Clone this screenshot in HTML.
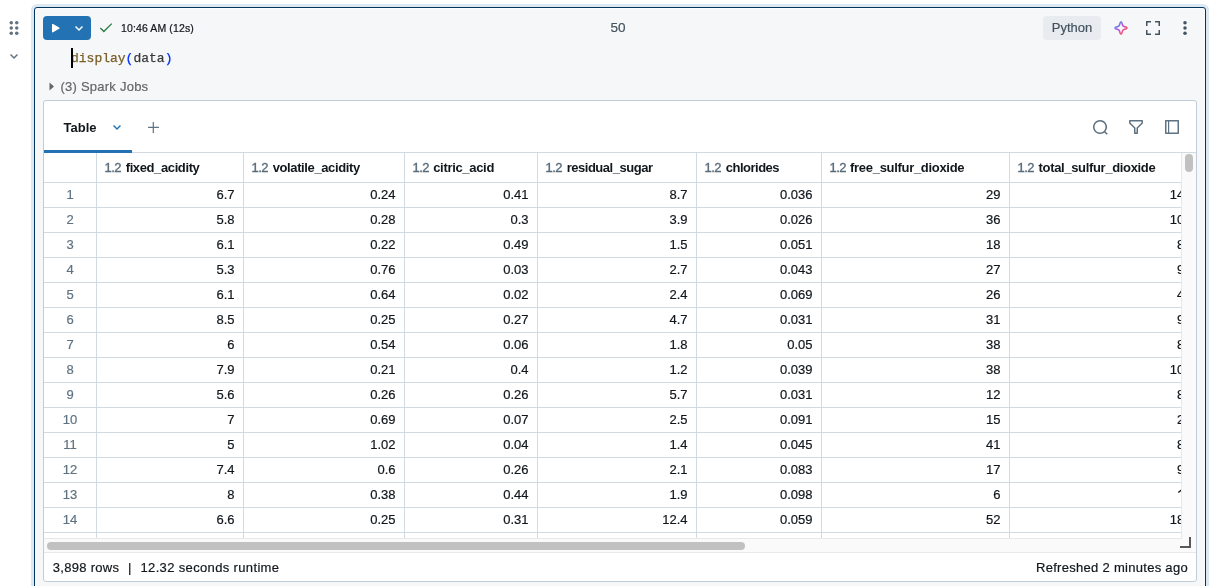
<!DOCTYPE html>
<html><head><meta charset="utf-8"><title>Notebook</title><style>*{box-sizing:border-box;margin:0;padding:0}
html,body{width:1211px;height:586px;overflow:hidden;background:#fff}
body{font-family:"Liberation Sans",sans-serif;font-size:13px;color:#11171c;position:relative;-webkit-text-stroke:0.2px}
.abs{position:absolute}
#root{position:absolute;left:0;top:0;width:1211px;height:586px;overflow:hidden;will-change:transform;transform:translateZ(0)}
.halo{position:absolute;left:31px;top:4px;width:1178px;height:600px;border-radius:6px;background:#dce8f2}
.cell{position:absolute;left:34px;top:7px;width:1172px;height:600px;border:1px solid #04355d;border-radius:3px;background:#f6f7f9;box-shadow:inset 0 0 0 1px #fdfdfe}
.runbtn{position:absolute;left:43px;top:16px;width:48px;height:24px;border-radius:4px;background:#2272b4}
.time{position:absolute;left:121px;top:21px;font-size:10.5px;line-height:14px;color:#11171c;white-space:nowrap;letter-spacing:0.12px}
.num{position:absolute;left:600px;top:20px;width:36px;text-align:center;font-size:13.5px;line-height:16px;color:#44535f}
.tag{position:absolute;left:1043px;top:16px;width:58px;height:24px;border-radius:4px;background:#e8ecf0;color:#44535f;font-size:13px;line-height:24px;text-align:center}
.code{position:absolute;left:71px;top:49.5px;-webkit-text-stroke:0.25px;font-family:"Liberation Mono",monospace;font-size:13px;line-height:18px;white-space:pre;color:#3a3a3a}
.code .f{color:#795e26}.code .p{color:#0431fa}
.cursor{position:absolute;left:71px;top:48px;width:2px;height:20px;background:#000}
.spark{position:absolute;left:60.5px;top:78.5px;font-size:13px;line-height:16px;color:#666;white-space:nowrap;letter-spacing:0.236px}
.out{position:absolute;left:43px;top:100px;width:1154px;height:482px;border:1px solid #c0cdd8;border-radius:3px;background:#fff;overflow:hidden}
.tabname{position:absolute;left:63.6px;top:120px;font-size:13px;line-height:16px;font-weight:bold;color:#11171c;-webkit-text-stroke:0}
.tabline{position:absolute;left:44px;top:150px;width:88px;height:3px;background:#2272b4;z-index:3}
.grid{position:absolute;left:44px;top:152px;width:1137px;height:386px;overflow:hidden;background:#fff;border-top:1px solid #d1d9e1}
.hrow{position:absolute;left:0;top:0;width:1160px;height:30px;border-bottom:1px solid #d1d9e1}
.hc{position:absolute;top:0;height:29px;border-right:1px solid #d1d9e1;line-height:29px;white-space:nowrap;font-size:13px;overflow:hidden}
.hc{box-sizing:border-box}
.hc .ty{color:#586b7a;position:absolute;left:7.5px;top:0;letter-spacing:-0.6px;-webkit-text-stroke:0.35px}
.hc .nm{font-weight:bold;color:#11171c;position:absolute;top:0;-webkit-text-stroke:0}
.row{position:absolute;left:0;width:1160px;height:25px;border-bottom:1px solid #d1d9e1}
.c{position:absolute;top:0;height:24px;border-right:1px solid #d1d9e1;line-height:24px;text-align:right;padding-right:8.5px;white-space:nowrap;font-size:13px;color:#11171c}
.c.idx{text-align:center;padding-right:0;color:#5f7281}
.hc,.c{width:auto}
.vtrack{position:absolute;left:1181px;top:153px;width:15px;height:385px;background:#fafafa;border-left:1px solid #e8e8e8}
.vthumb{position:absolute;left:1185px;top:154px;width:8px;height:18px;border-radius:4px;background:#c1c1c1}
.htrack{position:absolute;left:44px;top:538px;width:1152px;height:15px;background:#fafafa;border-bottom:1px solid #e8e8e8}
.htop{position:absolute;left:44px;top:538px;width:1138px;height:1px;background:#e8e8e8}
.hthumb{position:absolute;left:47px;top:542px;width:698px;height:8px;border-radius:4px;background:#c1c1c1}
.foot{position:absolute;top:560px;font-size:13px;line-height:16px;color:#11171c;white-space:nowrap}
</style></head><body><div id="root">
<div class="halo"></div>
<div class="cell"></div>
<!-- gutter icons -->
<svg class="abs" style="left:6px;top:20px" width="16" height="16" viewBox="0 0 16 16"><g fill="#5f7281"><circle cx="5.25" cy="2.75" r="1.75"/><circle cx="10.75" cy="2.75" r="1.75"/><circle cx="5.25" cy="8" r="1.75"/><circle cx="10.75" cy="8" r="1.75"/><circle cx="5.25" cy="13.25" r="1.75"/><circle cx="10.75" cy="13.25" r="1.75"/></g></svg>
<svg class="abs" style="left:6px;top:48px" width="16" height="16" viewBox="0 0 16 16"><path fill="#5f7281" fill-rule="evenodd" d="M8 8.917 10.947 6 12 7.042 8 11 4 7.042 5.053 6z"/></svg>
<div class="runbtn"></div>
<svg class="abs" style="left:47px;top:20px" width="16" height="16" viewBox="0 0 16 16"><path fill="#fff" d="M12.125 8.864a.75.75 0 0 0 0-1.3l-6-3.464A.75.75 0 0 0 5 4.750v6.928a.75.75 0 0 0 1.125.65z"/></svg>
<svg class="abs" style="left:71px;top:20px" width="16" height="16" viewBox="0 0 16 16"><path fill="#fff" fill-rule="evenodd" d="M8 8.917 10.947 6 12 7.042 8 11 4 7.042 5.053 6z"/></svg>
<svg class="abs" style="left:99px;top:21px" width="14" height="14" viewBox="0 0 16 16"><path fill="#277c43" fill-rule="evenodd" d="m15.06 3.56-9.53 9.53L1 8.56 2.06 7.5l3.47 3.47L14 2.5z"/></svg>
<div class="time">10:46 AM (12s)</div>
<div class="num">50</div>
<div class="tag">Python</div>
<div class="code"><span class="f">display</span><span class="p">(</span>data<span class="p">)</span></div>
<div class="cursor"></div>
<svg class="abs" style="left:48.5px;top:82px" width="6" height="9" viewBox="0 0 6 9"><path d="M0.5 0.5 L5 4.5 L0.5 8.5 Z" fill="#666"/></svg>
<div class="spark">(3) Spark Jobs</div>
<div class="out"></div>
<div class="tabname">Table</div>
<svg class="abs" style="left:109px;top:119px" width="16" height="16" viewBox="0 0 16 16"><path fill="#2272b4" fill-rule="evenodd" d="M8 8.917 10.947 6 12 7.042 8 11 4 7.042 5.053 6z"/></svg>
<svg class="abs" style="left:147px;top:121px" width="14" height="14" viewBox="0 0 14 14"><path d="M6.3 1.1 V12 M1.1 6.4 H12" fill="none" stroke="#5f7281" stroke-width="1.2"/></svg>
<div class="abs" style="left:44px;top:152px;width:1152px;height:1px;background:#d1d9e1;z-index:2"></div>
<div class="tabline"></div>
<!-- sparkle -->
<svg class="abs" style="left:1113px;top:20px" width="16" height="16" viewBox="0 0 16 16"><defs><linearGradient id="sg" x1="0.1" y1="0.1" x2="0.9" y2="0.9"><stop offset="0.1" stop-color="#4299e0"/><stop offset="0.5" stop-color="#ca42e0"/><stop offset="0.9" stop-color="#ff5f46"/></linearGradient></defs><path fill="url(#sg)" fill-rule="evenodd" d="M10.726 8.813 13.199 8l-2.473-.813a3 3 0 0 1-1.913-1.913L8 2.801l-.813 2.473a3 3 0 0 1-1.913 1.913L2.801 8l2.473.813a3 3 0 0 1 1.913 1.913L8 13.199l.813-2.473a3 3 0 0 1 1.913-1.913m2.941.612c1.376-.452 1.376-2.398 0-2.85l-2.473-.813a1.5 1.5 0 0 1-.956-.956l-.813-2.473c-.452-1.376-2.398-1.376-2.85 0l-.813 2.473a1.5 1.5 0 0 1-.956.956l-2.473.813c-1.376.452-1.376 2.398 0 2.85l2.473.813a1.5 1.5 0 0 1 .956.957l.813 2.472c.452 1.376 2.398 1.376 2.85 0l.813-2.473a1.5 1.5 0 0 1 .956-.956z" clip-rule="evenodd"/></svg>
<!-- fullscreen -->
<svg class="abs" style="left:1145px;top:20px" width="16" height="16" viewBox="0 0 16 16"><path fill="#44535f" d="M6 1v1.5H2.5V6H1V1zM10 2.5V1h5v5h-1.5V2.5zM2.5 10v3.5H6V15H1v-5zM13.5 13.500V10H15v5h-5v-1.500z"/></svg>
<!-- kebab -->
<svg class="abs" style="left:1177px;top:20px" width="16" height="16" viewBox="0 0 16 16"><g fill="#44535f"><circle cx="8" cy="2.75" r="1.75"/><circle cx="8" cy="8" r="1.75"/><circle cx="8" cy="13.25" r="1.75"/></g></svg>
<!-- search -->
<svg class="abs" style="left:1092px;top:119px" width="16" height="16" viewBox="0 0 16 16"><path fill="#5f7281" fill-rule="evenodd" d="M8 1a7 7 0 1 0 4.391 12.452l2.329 2.328 1.06-1.060-2.328-2.329A7 7 0 0 0 8 1M2.500 8a5.500 5.500 0 1 1 11 0 5.500 5.500 0 0 1-11 0"/></svg>
<!-- filter -->
<svg class="abs" style="left:1128px;top:119px" width="16" height="16" viewBox="0 0 16 16"><path fill="#5f7281" fill-rule="evenodd" d="M1 1.750A.75.75 0 0 1 1.750 1h12.500a.75.75 0 0 1 .75.750V4a.75.75 0 0 1-.22.530L10 9.310v4.940a.75.75 0 0 1-.75.750h-2.500a.75.75 0 0 1-.75-.750V9.310L1.220 4.530A.75.75 0 0 1 1 4zm1.500.750v1.190l4.780 4.780c.14.140.22.330.22.530v4.500h1V9a.75.750 0 0 1 .22-.530l4.780-4.780V2.500z"/></svg>
<!-- sidebar -->
<svg class="abs" style="left:1164px;top:119px" width="16" height="16" viewBox="0 0 16 16"><path fill="#5f7281" fill-rule="evenodd" d="M1 1.750A.75.75 0 0 1 1.750 1h12.500a.75.75 0 0 1 .75.750v12.500a.75.75 0 0 1-.75.750H1.750a.75.75 0 0 1-.75-.750zm1.500.750v11H4v-11zm2.700 0v11h8.300v-11z"/></svg>

<div class="grid">
<div class="hrow">
<div class="hc idx" style="left:0;width:53px"></div>
<div class="hc" style="left:53px;width:147px"><span class="ty">1.2</span><span class="nm" style="left:28.7px;letter-spacing:-0.385px">fixed_acidity</span></div>
<div class="hc" style="left:200px;width:161px"><span class="ty">1.2</span><span class="nm" style="left:28.7px;letter-spacing:-0.385px">volatile_acidity</span></div>
<div class="hc" style="left:361px;width:133px"><span class="ty">1.2</span><span class="nm" style="left:28.2px;letter-spacing:-0.317px">citric_acid</span></div>
<div class="hc" style="left:494px;width:159px"><span class="ty">1.2</span><span class="nm" style="left:28.7px;letter-spacing:-0.479px">residual_sugar</span></div>
<div class="hc" style="left:653px;width:125px"><span class="ty">1.2</span><span class="nm" style="left:28.8px;letter-spacing:-0.508px">chlorides</span></div>
<div class="hc" style="left:778px;width:188px"><span class="ty">1.2</span><span class="nm" style="left:28.1px;letter-spacing:-0.305px">free_sulfur_dioxide</span></div>
<div class="hc" style="left:966px;width:191px"><span class="ty">1.2</span><span class="nm" style="left:28.6px;letter-spacing:-0.342px">total_sulfur_dioxide</span></div>
</div>
<div class="row" style="top:30px">
<div class="c idx" style="left:0;width:53px">1</div>
<div class="c" style="left:53px;width:147px">6.7</div>
<div class="c" style="left:200px;width:161px">0.24</div>
<div class="c" style="left:361px;width:133px">0.41</div>
<div class="c" style="left:494px;width:159px">8.7</div>
<div class="c" style="left:653px;width:125px">0.036</div>
<div class="c" style="left:778px;width:188px">29</div>
<div class="c" style="left:966px;width:191px">149</div>
</div>
<div class="row" style="top:55px">
<div class="c idx" style="left:0;width:53px">2</div>
<div class="c" style="left:53px;width:147px">5.8</div>
<div class="c" style="left:200px;width:161px">0.28</div>
<div class="c" style="left:361px;width:133px">0.3</div>
<div class="c" style="left:494px;width:159px">3.9</div>
<div class="c" style="left:653px;width:125px">0.026</div>
<div class="c" style="left:778px;width:188px">36</div>
<div class="c" style="left:966px;width:191px">105</div>
</div>
<div class="row" style="top:80px">
<div class="c idx" style="left:0;width:53px">3</div>
<div class="c" style="left:53px;width:147px">6.1</div>
<div class="c" style="left:200px;width:161px">0.22</div>
<div class="c" style="left:361px;width:133px">0.49</div>
<div class="c" style="left:494px;width:159px">1.5</div>
<div class="c" style="left:653px;width:125px">0.051</div>
<div class="c" style="left:778px;width:188px">18</div>
<div class="c" style="left:966px;width:191px">87</div>
</div>
<div class="row" style="top:105px">
<div class="c idx" style="left:0;width:53px">4</div>
<div class="c" style="left:53px;width:147px">5.3</div>
<div class="c" style="left:200px;width:161px">0.76</div>
<div class="c" style="left:361px;width:133px">0.03</div>
<div class="c" style="left:494px;width:159px">2.7</div>
<div class="c" style="left:653px;width:125px">0.043</div>
<div class="c" style="left:778px;width:188px">27</div>
<div class="c" style="left:966px;width:191px">93</div>
</div>
<div class="row" style="top:130px">
<div class="c idx" style="left:0;width:53px">5</div>
<div class="c" style="left:53px;width:147px">6.1</div>
<div class="c" style="left:200px;width:161px">0.64</div>
<div class="c" style="left:361px;width:133px">0.02</div>
<div class="c" style="left:494px;width:159px">2.4</div>
<div class="c" style="left:653px;width:125px">0.069</div>
<div class="c" style="left:778px;width:188px">26</div>
<div class="c" style="left:966px;width:191px">46</div>
</div>
<div class="row" style="top:155px">
<div class="c idx" style="left:0;width:53px">6</div>
<div class="c" style="left:53px;width:147px">8.5</div>
<div class="c" style="left:200px;width:161px">0.25</div>
<div class="c" style="left:361px;width:133px">0.27</div>
<div class="c" style="left:494px;width:159px">4.7</div>
<div class="c" style="left:653px;width:125px">0.031</div>
<div class="c" style="left:778px;width:188px">31</div>
<div class="c" style="left:966px;width:191px">92</div>
</div>
<div class="row" style="top:180px">
<div class="c idx" style="left:0;width:53px">7</div>
<div class="c" style="left:53px;width:147px">6</div>
<div class="c" style="left:200px;width:161px">0.54</div>
<div class="c" style="left:361px;width:133px">0.06</div>
<div class="c" style="left:494px;width:159px">1.8</div>
<div class="c" style="left:653px;width:125px">0.05</div>
<div class="c" style="left:778px;width:188px">38</div>
<div class="c" style="left:966px;width:191px">89</div>
</div>
<div class="row" style="top:205px">
<div class="c idx" style="left:0;width:53px">8</div>
<div class="c" style="left:53px;width:147px">7.9</div>
<div class="c" style="left:200px;width:161px">0.21</div>
<div class="c" style="left:361px;width:133px">0.4</div>
<div class="c" style="left:494px;width:159px">1.2</div>
<div class="c" style="left:653px;width:125px">0.039</div>
<div class="c" style="left:778px;width:188px">38</div>
<div class="c" style="left:966px;width:191px">107</div>
</div>
<div class="row" style="top:230px">
<div class="c idx" style="left:0;width:53px">9</div>
<div class="c" style="left:53px;width:147px">5.6</div>
<div class="c" style="left:200px;width:161px">0.26</div>
<div class="c" style="left:361px;width:133px">0.26</div>
<div class="c" style="left:494px;width:159px">5.7</div>
<div class="c" style="left:653px;width:125px">0.031</div>
<div class="c" style="left:778px;width:188px">12</div>
<div class="c" style="left:966px;width:191px">80</div>
</div>
<div class="row" style="top:255px">
<div class="c idx" style="left:0;width:53px">10</div>
<div class="c" style="left:53px;width:147px">7</div>
<div class="c" style="left:200px;width:161px">0.69</div>
<div class="c" style="left:361px;width:133px">0.07</div>
<div class="c" style="left:494px;width:159px">2.5</div>
<div class="c" style="left:653px;width:125px">0.091</div>
<div class="c" style="left:778px;width:188px">15</div>
<div class="c" style="left:966px;width:191px">21</div>
</div>
<div class="row" style="top:280px">
<div class="c idx" style="left:0;width:53px">11</div>
<div class="c" style="left:53px;width:147px">5</div>
<div class="c" style="left:200px;width:161px">1.02</div>
<div class="c" style="left:361px;width:133px">0.04</div>
<div class="c" style="left:494px;width:159px">1.4</div>
<div class="c" style="left:653px;width:125px">0.045</div>
<div class="c" style="left:778px;width:188px">41</div>
<div class="c" style="left:966px;width:191px">85</div>
</div>
<div class="row" style="top:305px">
<div class="c idx" style="left:0;width:53px">12</div>
<div class="c" style="left:53px;width:147px">7.4</div>
<div class="c" style="left:200px;width:161px">0.6</div>
<div class="c" style="left:361px;width:133px">0.26</div>
<div class="c" style="left:494px;width:159px">2.1</div>
<div class="c" style="left:653px;width:125px">0.083</div>
<div class="c" style="left:778px;width:188px">17</div>
<div class="c" style="left:966px;width:191px">91</div>
</div>
<div class="row" style="top:330px">
<div class="c idx" style="left:0;width:53px">13</div>
<div class="c" style="left:53px;width:147px">8</div>
<div class="c" style="left:200px;width:161px">0.38</div>
<div class="c" style="left:361px;width:133px">0.44</div>
<div class="c" style="left:494px;width:159px">1.9</div>
<div class="c" style="left:653px;width:125px">0.098</div>
<div class="c" style="left:778px;width:188px">6</div>
<div class="c" style="left:966px;width:191px"><svg style="position:absolute;left:158px;top:0" width="14" height="24" viewBox="0 0 14 24"><path d="M10.3 9.6 L13.6 6.9" stroke="#11171c" stroke-width="1.3" fill="none"/></svg></div>
</div>
<div class="row" style="top:355px">
<div class="c idx" style="left:0;width:53px">14</div>
<div class="c" style="left:53px;width:147px">6.6</div>
<div class="c" style="left:200px;width:161px">0.25</div>
<div class="c" style="left:361px;width:133px">0.31</div>
<div class="c" style="left:494px;width:159px">12.4</div>
<div class="c" style="left:653px;width:125px">0.059</div>
<div class="c" style="left:778px;width:188px">52</div>
<div class="c" style="left:966px;width:191px">181</div>
</div>
<div class="row" style="top:380px">
<div class="c idx" style="left:0;width:53px"></div>
<div class="c" style="left:53px;width:147px"></div>
<div class="c" style="left:200px;width:161px"></div>
<div class="c" style="left:361px;width:133px"></div>
<div class="c" style="left:494px;width:159px"></div>
<div class="c" style="left:653px;width:125px"></div>
<div class="c" style="left:778px;width:188px"></div>
<div class="c" style="left:966px;width:191px"></div>
</div>
</div>
<div class="vtrack"></div><div class="vthumb"></div>
<div class="htrack"></div><div class="htop"></div><div class="hthumb"></div>
<div class="foot" style="left:52.7px;letter-spacing:0.31px">3,898 rows</div><div class="foot" style="left:128px">|</div><div class="foot" style="left:140.5px;letter-spacing:0.35px">12.32 seconds runtime</div>
<div class="foot" style="left:1036px;letter-spacing:0.29px">Refreshed 2 minutes ago</div>
<div class="abs" style="left:1189px;top:537px;width:2px;height:11px;background:#595959"></div>
<div class="abs" style="left:1180px;top:546px;width:11px;height:2px;background:#595959"></div>

</div></body></html>
